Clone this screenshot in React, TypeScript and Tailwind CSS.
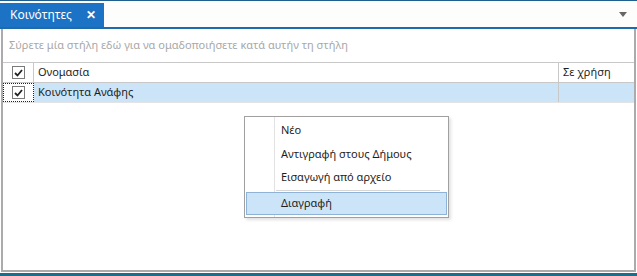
import React from "react";

const Check = () => (
  <div className="flex h-[13px] w-[13px] items-center justify-center border border-[#7a7a7a] bg-white">
    <svg width="9" height="8" viewBox="0 0 9 8">
      <path d="M1 4 L3.5 6.5 L8 1" stroke="#222" strokeWidth="1.8" fill="none" />
    </svg>
  </div>
);

const MenuItem = ({ label, h }: { label: string; h: string }) => (
  <div className={`flex items-center pl-[36px] ${h}`}>{label}</div>
);

export default function App() {
  return (
    <div
      className="relative h-[276px] w-[637px] overflow-hidden bg-white text-[11px] text-[#1e1e1e]"
      style={{ fontFamily: '"Noto Sans", "Open Sans", sans-serif' }}
    >
      <div className="h-[1px] bg-[#1f5f8f]" />
      <div className="flex h-[26px] items-end bg-[#fdfdfb]">
        <div className="flex h-[24px] w-[104px] items-center bg-[#1c72c4] pl-[10px] text-[12px] text-white">
          <span className="w-[76px]">Κοινότητες</span>
          <span className="text-[12px] font-bold">✕</span>
        </div>
        <div className="flex flex-1 justify-end self-center pr-[10px]">
          <svg width="8" height="5" viewBox="0 0 8 5">
            <path d="M0 0 H8 L4 5 Z" fill="#666" />
          </svg>
        </div>
      </div>
      <div className="h-[2px] bg-[#1f6aa8]" />
      <div className="ml-[1px] mr-[1px] flex h-[243px] flex-col border-x-2 border-b-2 border-[#ababab]">
        <div className="flex h-[33px] items-center pl-[6px] text-[#a8a8a8]">
          Σύρετε μία στήλη εδώ για να ομαδοποιήσετε κατά αυτήν τη στήλη
        </div>
        <div className="flex h-[21px] border-y border-[#c8c8c8]">
          <div className="flex w-[31px] items-center justify-center border-r border-[#c8c8c8]">
            <Check />
          </div>
          <div className="flex flex-1 items-center pl-[4px]">Ονομασία</div>
          <div className="flex w-[76px] items-center border-l border-[#c8c8c8] pl-[4px]">Σε χρήση</div>
        </div>
        <div className="flex h-[20px] border-b border-[#e4e4e4] bg-[#cce4f7]">
          <div className="flex w-[31px] items-center justify-center border border-dotted border-[#222] bg-white">
            <Check />
          </div>
          <div className="flex flex-1 items-center pl-[4px]">Κοινότητα Ανάφης</div>
          <div className="w-[76px] border-l border-[#c8c8c8]" />
        </div>
      </div>
      <div className="h-[1px]" />
      <div className="h-[3px] bg-[#1d6d8a]" />

      <div className="absolute left-[244px] top-[116px] w-[205px] border border-[#a0a0a0] bg-white pb-[2px] pt-[1px] shadow-[2px_2px_3px_rgba(0,0,0,0.12)]">
        <div className="absolute bottom-0 left-[29px] top-0 w-[1px] bg-[#e2e2e2]" />
        <MenuItem label="Νέο" h="h-[24px]" />
        <MenuItem label="Αντιγραφή στους Δήμους" h="h-[24px]" />
        <MenuItem label="Εισαγωγή από αρχείο" h="h-[23px]" />
        <div className="my-[1px] ml-[31px] mr-[8px] h-[1px] bg-[#d6d6d6]" />
        <div className="relative mx-[1px] flex h-[23px] items-center border border-[#8fb3d6] bg-[#cce4f7] pl-[34px]">
          Διαγραφή
        </div>
      </div>
    </div>
  );
}
